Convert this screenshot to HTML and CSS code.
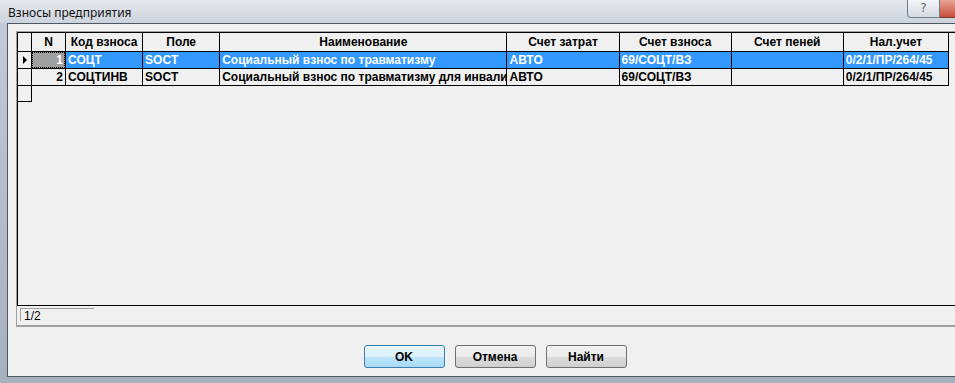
FILE: index.html
```html
<!DOCTYPE html>
<html lang="ru">
<head>
    <meta charset="UTF-8">
    <title>Взносы предприятия</title>
    <link rel="stylesheet" href="styles.css">
</head>
<body>
    <div class="window">
        <!-- Title bar -->
        <div class="titlebar">
            <span class="title">Взносы предприятия</span>
            <div class="caption-buttons">
                <div class="cap-help">?</div>
                <div class="cap-close"></div>
            </div>
        </div>

        <!-- Client area -->
        <div class="client">
            <div class="grid-frame">
                <div class="grid-data">
                    <table class="grid">
                        <colgroup>
                            <col class="c-ind">
                            <col class="c-n">
                            <col class="c-code">
                            <col class="c-field">
                            <col class="c-name">
                            <col class="c-acc">
                            <col class="c-acc">
                            <col class="c-acc">
                            <col class="c-tax">
                        </colgroup>
                        <thead>
                            <tr>
                                <th></th>
                                <th>N</th>
                                <th>Код взноса</th>
                                <th>Поле</th>
                                <th>Наименование</th>
                                <th>Счет затрат</th>
                                <th>Счет взноса</th>
                                <th>Счет пеней</th>
                                <th>Нал.учет</th>
                            </tr>
                        </thead>
                        <tbody>
                            <tr class="selected">
                                <td class="ind"><span class="arrow"></span></td>
                                <td class="num"><span class="focus">1</span></td>
                                <td>СОЦТ</td>
                                <td>SOCT</td>
                                <td>Социальный взнос по травматизму</td>
                                <td>АВТО</td>
                                <td>69/СОЦТ/ВЗ</td>
                                <td></td>
                                <td>0/2/1/ПР/264/45</td>
                            </tr>
                            <tr>
                                <td class="ind"></td>
                                <td class="num">2</td>
                                <td>СОЦТИНВ</td>
                                <td>SOCT</td>
                                <td>Социальный взнос по травматизму для инвали</td>
                                <td>АВТО</td>
                                <td>69/СОЦТ/ВЗ</td>
                                <td></td>
                                <td>0/2/1/ПР/264/45</td>
                            </tr>
                            <tr class="new-row">
                                <td class="ind"></td>
                                <td colspan="8"></td>
                            </tr>
                        </tbody>
                    </table>
                </div>
                <div class="status">
                    <div class="counter">1/2</div>
                </div>
            </div>

            <div class="buttons">
                <button class="btn default">OK</button>
                <button class="btn">Отмена</button>
                <button class="btn">Найти</button>
            </div>
        </div>
    </div>
</body>
</html>
```

FILE: styles.css
```css
/* Base */
body {
    margin: 0;
    background: #f0f0f0;
    font-family: 'Liberation Sans', Arial, sans-serif;
}

.window {
    width: 955px;
    height: 383px;
    overflow: hidden;
    display: flex;
    flex-direction: column;
    background: linear-gradient(to bottom, #c3ccd6, #a6b1be);
}

/* Title bar */
.titlebar {
    height: 23px;
    flex: none;
    display: flex;
    justify-content: space-between;
    align-items: flex-start;
    background: linear-gradient(to bottom, #e6e9ee, #ccd3db);
}

.title {
    font-family: 'Noto Sans', sans-serif;
    font-size: 12px;
    line-height: 16px;
    color: #111;
    padding: 5px 0 0 8px;
}

.caption-buttons {
    display: flex;
    margin-right: -28px;
}

.cap-help {
    width: 33px;
    height: 18px;
    box-sizing: border-box;
    border: 1px solid #6f7c8a;
    border-top: none;
    border-radius: 0 0 0 4px;
    background: linear-gradient(to bottom, #f3f5f8, #d4dae2);
    font-family: 'DejaVu Sans', sans-serif;
    font-size: 12px;
    line-height: 17px;
    color: #5f6770;
    text-align: center;
}

.cap-close {
    width: 43px;
    height: 18px;
    box-sizing: border-box;
    border: 1px solid #7a3a30;
    border-top: none;
    border-left: none;
    background: linear-gradient(to bottom, #e8a595, #c84f3c);
}

/* Client area */
.client {
    flex: 1;
    margin: 0 -20px 6px 7px;
    border: 1px solid #4d5864;
    background: #f0f0f0;
    display: flex;
    flex-direction: column;
    padding: 7px 0 0 8px;
}

.grid-frame {
    flex: 1;
    display: flex;
    flex-direction: column;
    border-top: 1px solid #a0a0a0;
    border-left: 1px solid #a0a0a0;
    border-bottom: 2px solid #a0a0a0;
}

.grid-data {
    flex: 1;
    border-left: 1px solid #000;
    border-top: 1px solid #000;
    border-bottom: 1px solid #000;
}

/* Grid */
.grid {
    table-layout: fixed;
    border-collapse: separate;
    border-spacing: 0;
    width: 931px;
    font-size: 12px;
    font-weight: bold;
    color: #000;
}

.c-ind { width: 14px; }
.c-n { width: 34px; }
.c-code { width: 77px; }
.c-field { width: 77px; }
.c-name { width: 287px; }
.c-acc { width: 112px; }
.c-tax { width: 105px; }

.grid th,
.grid td {
    border-right: 1px solid #000;
    border-bottom: 1px solid #000;
    padding: 0 2px;
    white-space: nowrap;
    overflow: hidden;
    text-align: left;
}

.grid th {
    height: 18px;
    text-align: center;
    font-weight: bold;
}

.grid td {
    height: 16px;
    line-height: 16px;
}

.grid td.num {
    text-align: right;
}

.grid td.ind {
    padding: 0;
    background: #f0f0f0;
}

.grid tr.selected td {
    background: #3399ff;
    color: #fff;
}

.grid tr.selected td.ind {
    background: #f0f0f0;
}

.grid tr.selected td.num {
    background: #a0a0a0;
    padding: 0;
}

.focus {
    display: block;
    height: 14px;
    line-height: 14px;
    border: 1px dotted #000;
    padding-right: 1px;
}

.arrow {
    display: block;
    width: 0;
    height: 0;
    margin: 0 0 0 5px;
    border-top: 4px solid transparent;
    border-bottom: 4px solid transparent;
    border-left: 4px solid #000;
}

.grid tr.new-row td {
    height: 15px;
    border: none;
}

.grid tr.new-row td.ind {
    border-right: 1px solid #000;
    border-bottom: 1px solid #000;
}

/* Status */
.status {
    height: 19px;
    padding: 2px 0 0 3px;
    box-sizing: border-box;
}

.counter {
    width: 74px;
    height: 13px;
    border-top: 1px solid #a0a0a0;
    border-left: 1px solid #a0a0a0;
    font-size: 12px;
    line-height: 14px;
    padding-left: 3px;
    box-sizing: border-box;
}

/* Buttons */
.buttons {
    display: flex;
    justify-content: center;
    gap: 10px;
    margin: 18px 0 8px;
}

.btn {
    width: 81px;
    height: 23px;
    border: 1px solid #707070;
    border-radius: 3px;
    background: linear-gradient(to bottom, #f2f2f2 0%, #ebebeb 50%, #dddddd 51%, #cfcfcf 100%);
    font-family: 'Liberation Sans', Arial, sans-serif;
    font-size: 12px;
    font-weight: bold;
    color: #000;
    padding: 0;
}

.btn.default {
    border-color: #3c7fb1;
    background: linear-gradient(to bottom, #eaf6fd 0%, #d9f0fc 50%, #bee6fd 51%, #a7d9f5 100%);
}
```
